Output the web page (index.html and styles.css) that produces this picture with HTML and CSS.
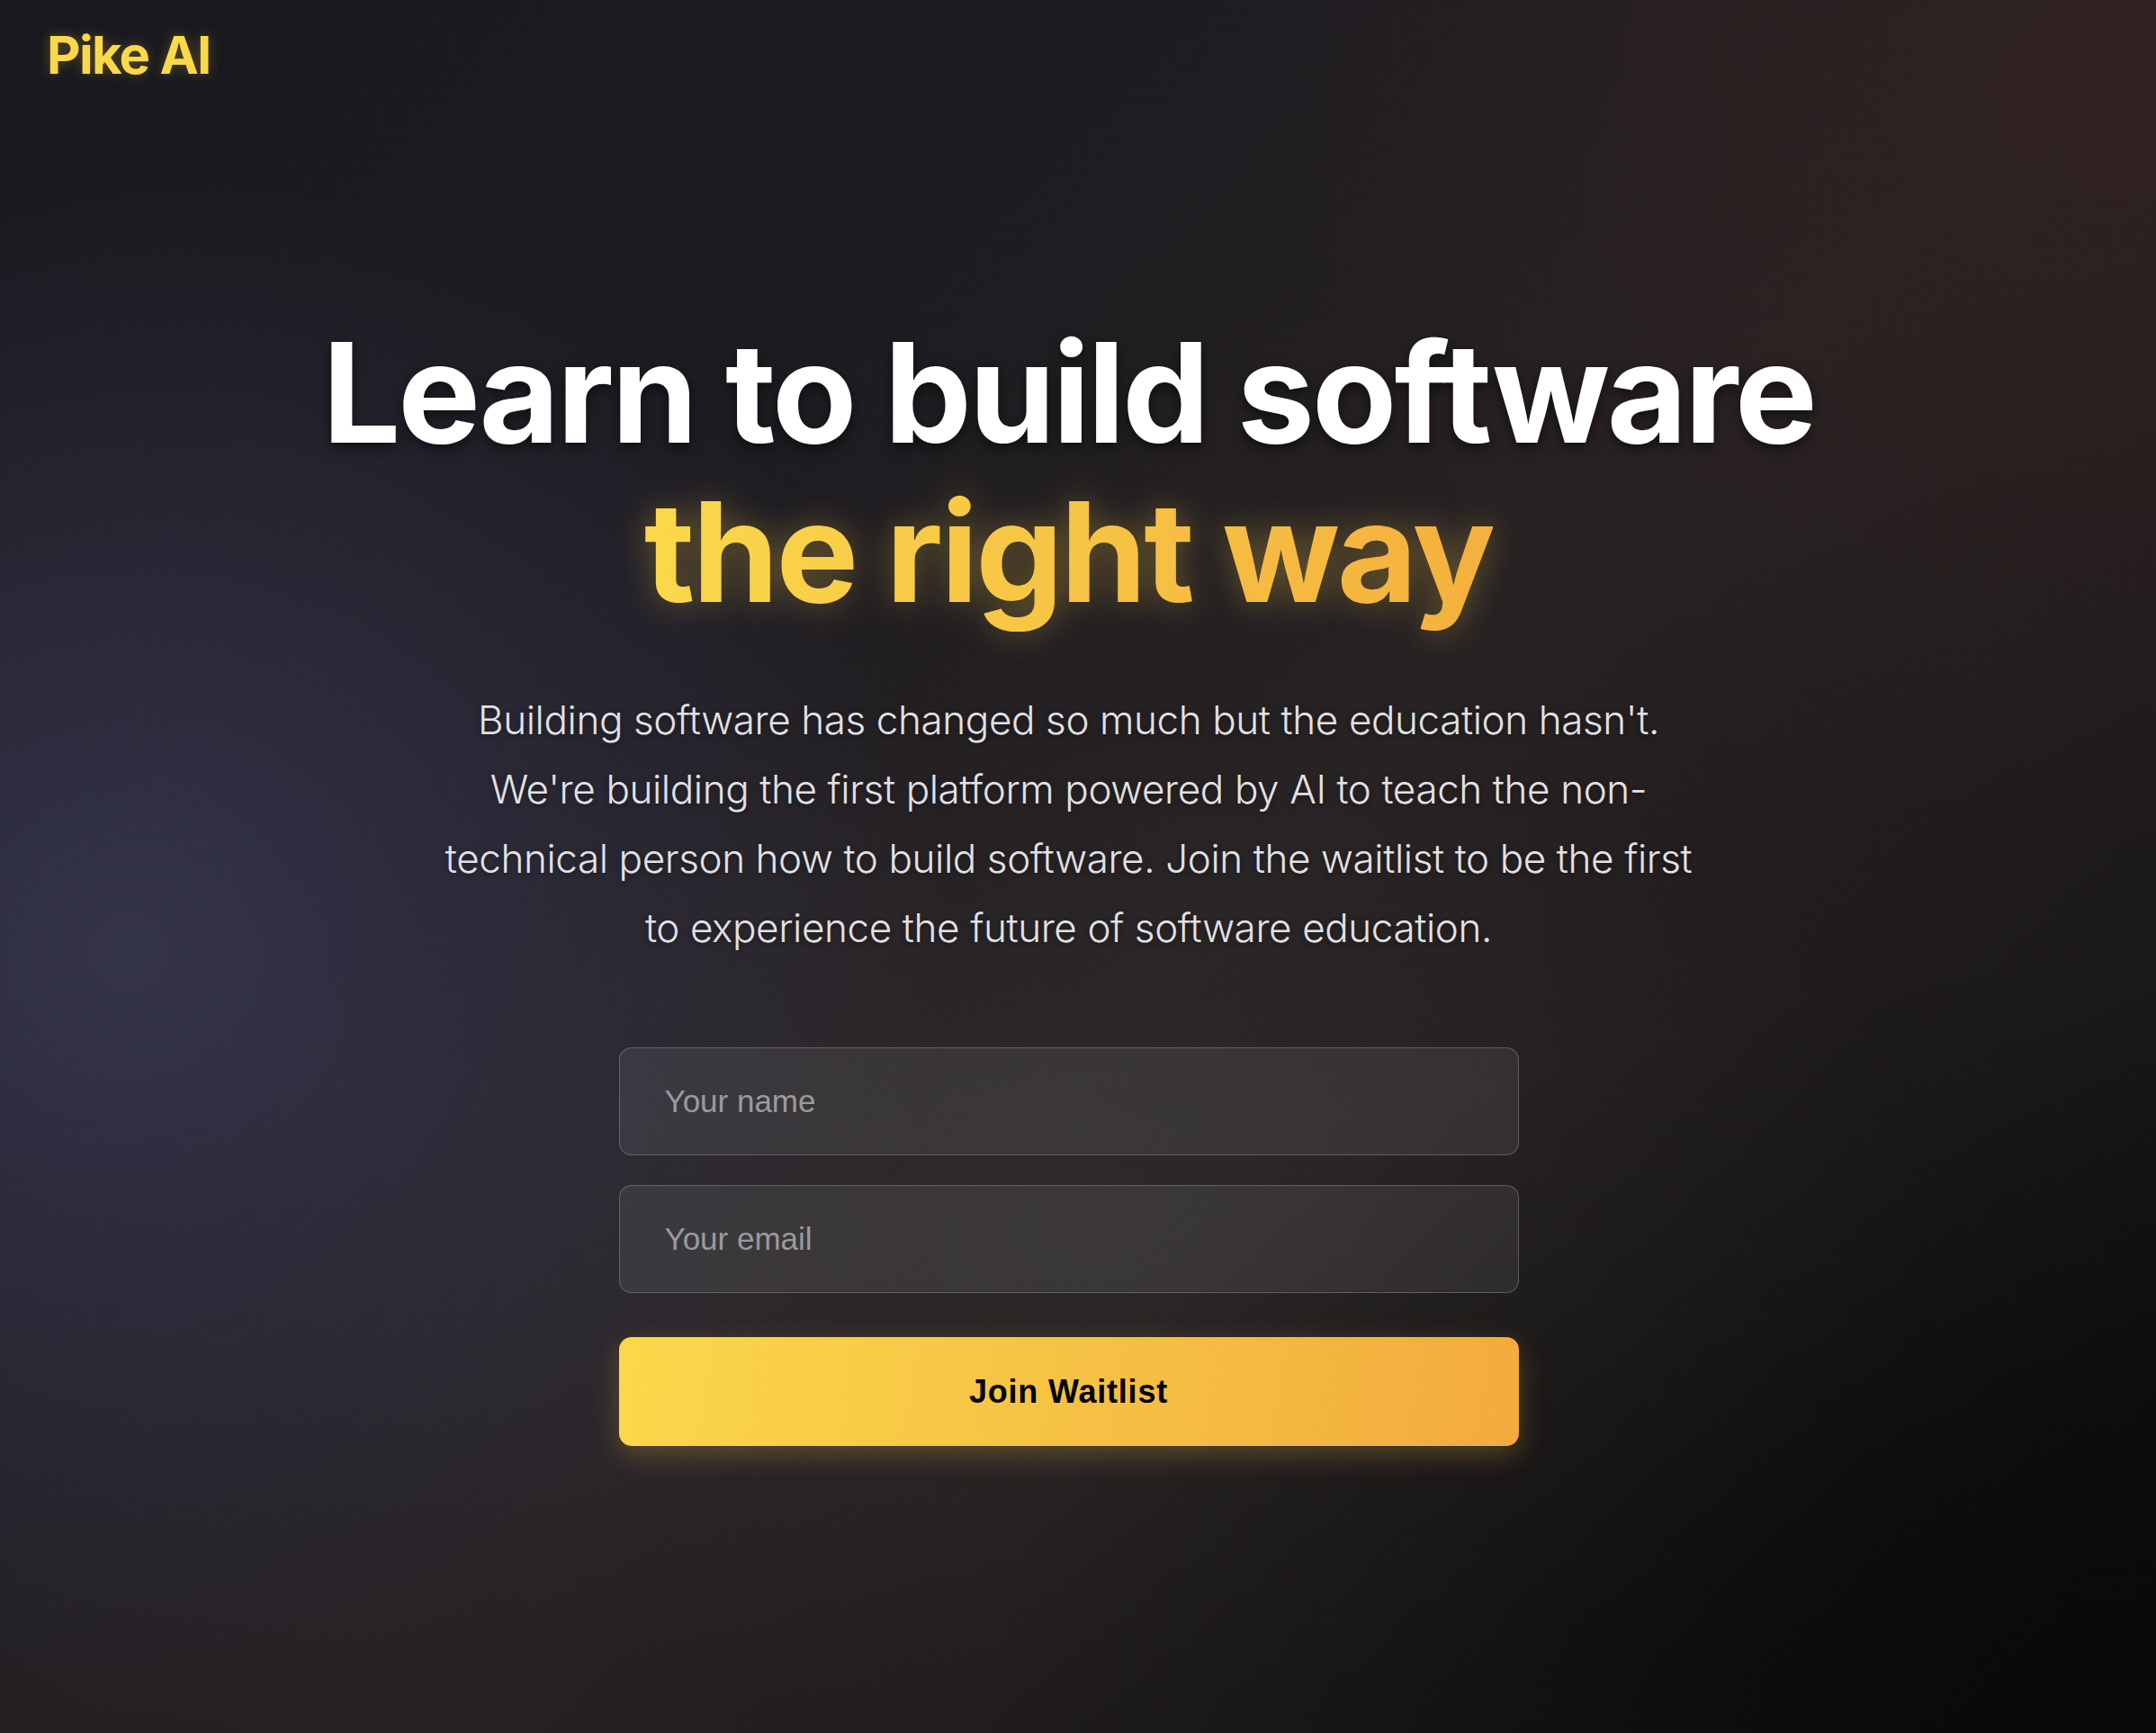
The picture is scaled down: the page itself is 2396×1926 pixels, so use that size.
FILE: index.html
```html
<!DOCTYPE html>
<html lang="en">
<head>
<meta charset="utf-8">
<title>Pike AI</title>
<link rel="stylesheet" href="styles.css">
</head>
<body>
<div class="page">
  <header class="top">
    <a class="logo" href="#">Pike AI</a>
  </header>
  <main class="hero">
    <h1 class="title">
      <span class="title-main">Learn to build software</span>
      <span class="title-accent">the right way</span>
    </h1>
    <p class="lead">Building software has changed so much but the education hasn't. We're building the first platform powered by AI to teach the non-technical person how to build software. Join the waitlist to be the first to experience the future of software education.</p>
    <form class="waitlist" onsubmit="return false">
      <input class="field" type="text" placeholder="Your name">
      <input class="field" type="email" placeholder="Your email">
      <button class="join" type="submit">Join Waitlist</button>
    </form>
  </main>
</div>
</body>
</html>
```

FILE: styles.css
```css
* { box-sizing: border-box; }

html, body {
  margin: 0;
  padding: 0;
}

body {
  min-height: 100vh;
  font-family: Inter, "Noto Sans", sans-serif;
  color: #fff;
  background-color: #1b1a1e;
  background-image:
    radial-gradient(ellipse 38% 45% at 6% 55%, rgba(62, 62, 92, 0.7), rgba(62, 62, 92, 0) 100%),
    radial-gradient(ellipse 40% 45% at 100% 4%, rgba(52, 34, 32, 0.7), rgba(52, 34, 32, 0) 100%),
    radial-gradient(ellipse 55% 45% at 100% 100%, rgba(8, 8, 8, 0.85), rgba(8, 8, 8, 0) 100%),
    radial-gradient(ellipse 40% 30% at 50% 70%, rgba(52, 48, 48, 0.55), rgba(52, 48, 48, 0) 100%),
    linear-gradient(135deg, #18191e 0%, #1e1c21 30%, #272223 55%, #1c1919 80%, #0e0d0d 100%);
}

.page {
  min-height: 100vh;
  display: flex;
  flex-direction: column;
}

.top {
  padding: 26px 52px 0;
}

.logo {
  display: inline-block;
  font-family: Inter, sans-serif;
  font-weight: 700;
  font-size: 58px;
  line-height: 70px;
  letter-spacing: -1.7px;
  color: #fbd84a;
  text-decoration: none;
  text-shadow: 0 0 14px rgba(251, 200, 60, 0.3);
}

.hero {
  display: flex;
  flex-direction: column;
  align-items: center;
  padding: 252px 21px 0 0;
}

.title {
  margin: 0;
  display: flex;
  flex-direction: column;
  align-items: center;
  font-family: Inter, sans-serif;
  font-weight: 700;
  font-size: 154px;
  line-height: 177px;
  letter-spacing: -3px;
}

.title-main {
  color: #fff;
  text-shadow: 0 5px 14px rgba(0, 0, 0, 0.55);
}

.title-accent {
  background-image: linear-gradient(90deg, #fbd84a 0%, #f6c043 60%, #f4b03e 100%);
  -webkit-background-clip: text;
  background-clip: text;
  -webkit-text-fill-color: transparent;
  color: transparent;
  filter: drop-shadow(0 0 18px rgba(250, 200, 60, 0.35));
}

.lead {
  margin: 60px 0 0;
  max-width: 1420px;
  text-align: center;
  font-family: Inter, sans-serif;
  font-weight: 300;
  font-size: 44px;
  line-height: 77px;
  letter-spacing: -0.4px;
  color: #e2e1e4;
  text-shadow: 0 2px 6px rgba(0, 0, 0, 0.35);
}

.waitlist {
  margin-top: 94px;
  width: 1000px;
  display: flex;
  flex-direction: column;
  gap: 33px;
}

.field {
  height: 120px;
  padding: 0 50px;
  border: 1.5px solid rgba(255, 255, 255, 0.22);
  border-radius: 14px;
  background: rgba(255, 255, 255, 0.07);
  font-family: "Liberation Sans", Arial, sans-serif;
  font-size: 35px;
  color: #fff;
  outline: none;
}

.field::placeholder {
  color: #9b9a9d;
}

.join {
  margin-top: 16px;
  height: 121px;
  border: 0;
  border-radius: 14px;
  background: linear-gradient(100deg, #fbd84a 0%, #f6c445 45%, #f3ab3d 100%);
  box-shadow: 0 10px 30px rgba(250, 190, 60, 0.25);
  font-family: "Liberation Sans", Arial, sans-serif;
  font-weight: 700;
  font-size: 36px;
  letter-spacing: 0.8px;
  color: #000;
  cursor: pointer;
}
```
